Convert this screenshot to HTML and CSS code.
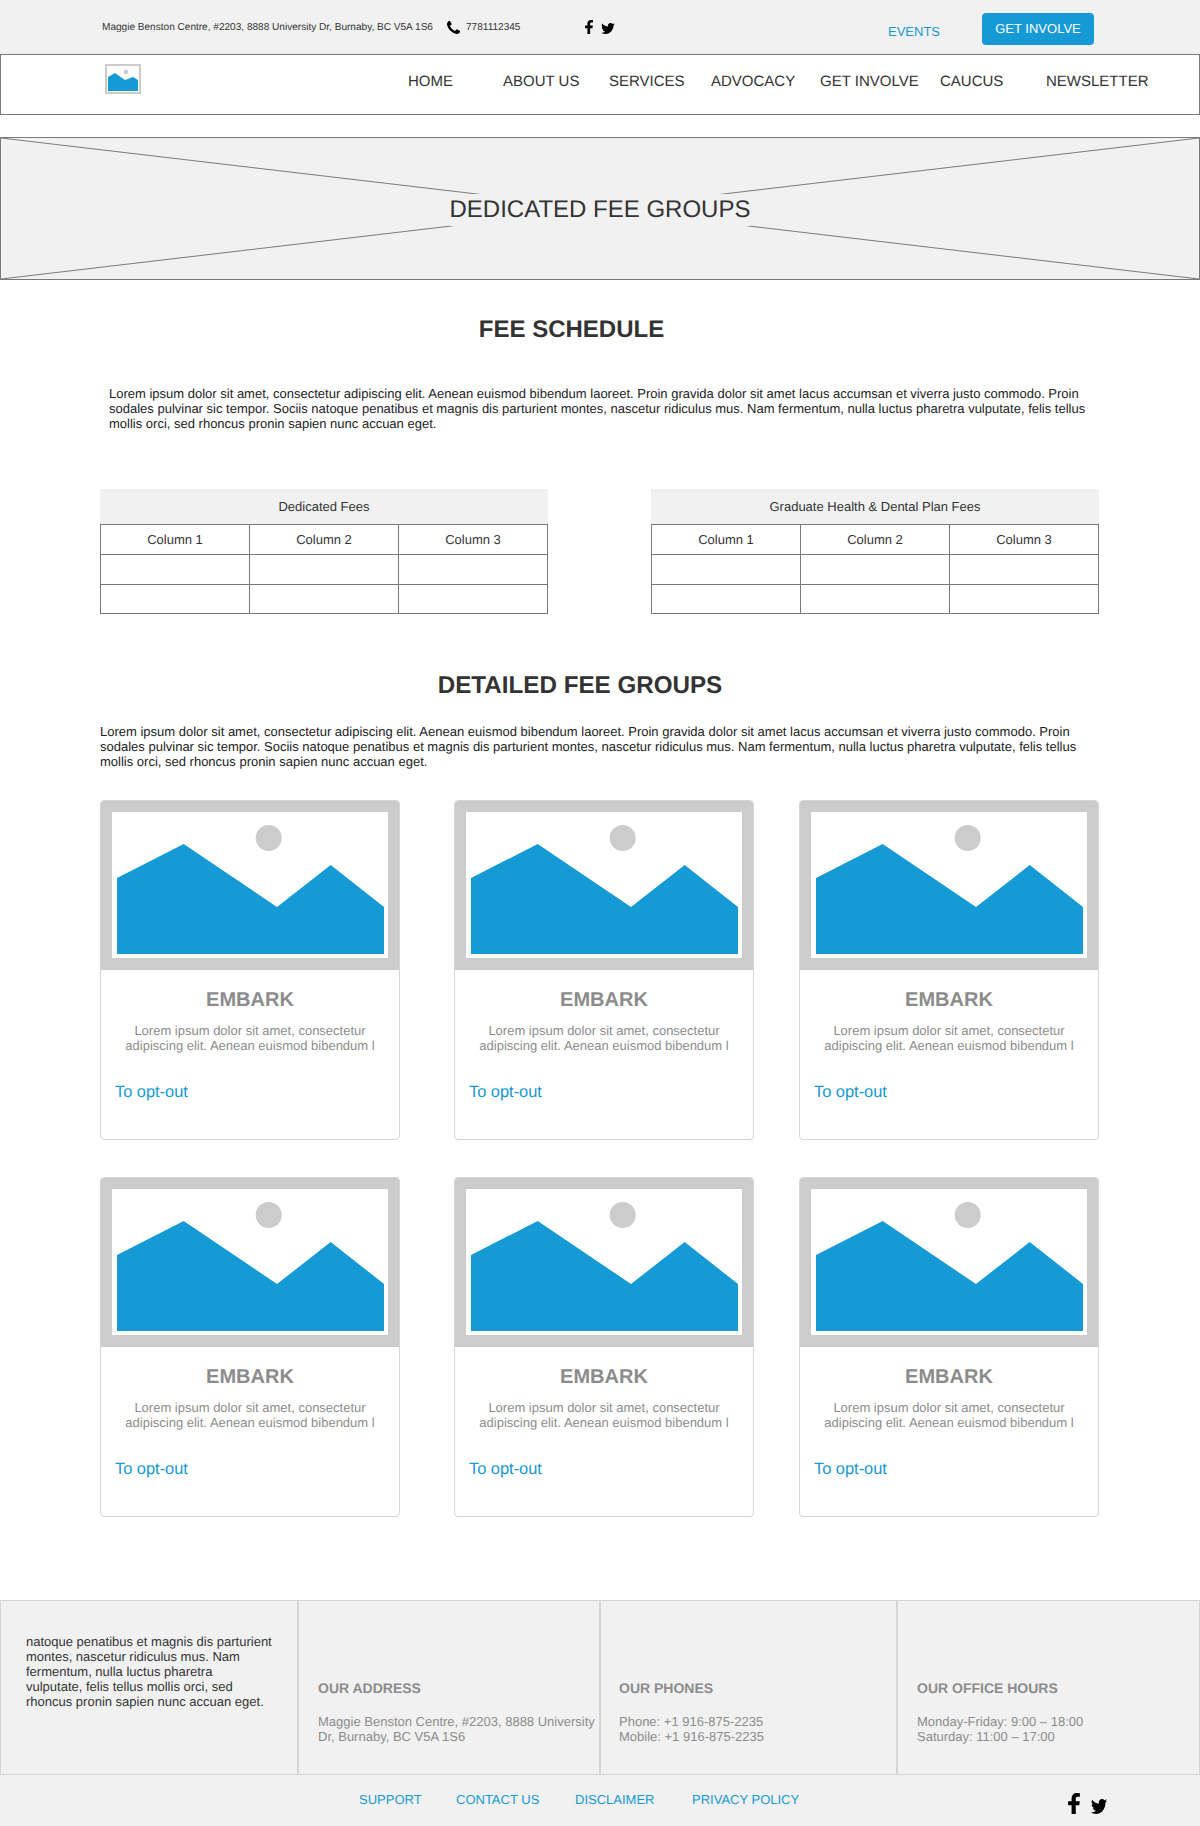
FILE: index.html
```html
<!DOCTYPE html>
<html lang="en">
<head>
    <meta charset="UTF-8">
    <meta name="viewport" content="width=device-width, initial-scale=1.0">
    <title>Dedicated Fee Groups</title>
    <link rel="stylesheet" href="styles.css">
</head>
<body>

<!-- Top bar -->
<div class="topbar">
    <span class="top-address">Maggie Benston Centre, #2203, 8888 University Dr, Burnaby, BC V5A 1S6</span>
    <svg class="top-phone-icon" viewBox="0 0 1408 1408"><path d="M1408 1112q0 27-10 70.5t-21 68.5q-21 50-122 106-94 51-186 51-27 0-53-3.5t-57.5-12.5-47-14.5-55.5-20.5-49-18q-98-35-175-83-127-79-264-216t-216-264q-48-77-83-175-3-9-18-49t-20.5-55.5-14.5-47-12.5-57.5-3.5-53q0-92 51-186 56-101 106-122 25-11 68.5-21t70.5-10q14 0 21 3 18 6 53 76 11 19 30 54t35 63.5 31 53.5q3 4 17.5 25t21.5 35.5 7 28.5q0 20-28.5 50t-62 55-62 53-28.5 46q0 9 5 22.5t8.5 20.5 14 24 11.5 19q76 137 174 235t235 174q2 1 19 11.5t24 14 20.5 8.5 22.5 5q18 0 46-28.5t53-62 55-62 50-28.5q14 0 28.5 7t35.5 21.5 25 17.5q25 15 53.5 31t63.5 35 54 30q70 35 76 53 3 7 3 21z"/></svg>
    <span class="top-phone">7781112345</span>
    <div class="top-social">
        <svg class="icon-f" viewBox="95 0 864 1536"><path d="M959 12v264h-157q-86 0-116 36t-30 108v189h293l-39 296h-254v759h-306v-759h-255v-296h255v-218q0-186 104-288.5t277-102.5q147 0 228 12z"/></svg>
        <svg class="icon-tw" viewBox="0 48 512 416"><path d="M459.37 151.716c.325 4.548.325 9.097.325 13.645 0 138.72-105.583 298.558-298.558 298.558-59.452 0-114.68-17.219-161.137-47.106 8.447.974 16.568 1.299 25.34 1.299 49.055 0 94.213-16.568 130.274-44.832-46.132-.975-84.792-31.188-98.112-72.772 6.498.974 12.995 1.624 19.818 1.624 9.421 0 18.843-1.3 27.614-3.573-48.081-9.747-84.143-51.98-84.143-102.985v-1.299c13.969 7.797 30.214 12.67 47.431 13.319-28.264-18.843-46.781-51.005-46.781-87.391 0-19.492 5.197-37.36 14.294-52.954 51.655 63.675 129.3 105.258 216.365 109.807-1.624-7.797-2.599-15.918-2.599-24.04 0-57.828 46.782-104.934 104.934-104.934 30.213 0 57.502 12.67 76.67 33.137 23.715-4.548 46.456-13.32 66.599-25.34-7.798 24.366-24.366 44.833-46.132 57.827 21.117-2.273 41.584-8.122 60.426-16.243-14.292 20.791-32.161 39.308-52.628 54.253z"/></svg>
    </div>
    <a class="top-events" href="#">EVENTS</a>
    <a class="top-button" href="#">GET INVOLVE</a>
</div>

<!-- Main nav -->
<div class="navbar">
    <svg class="nav-logo" viewBox="0 0 36 30">
        <rect x="1" y="1" width="34" height="28" fill="#fff" stroke="#ccc" stroke-width="2"/>
        <circle cx="21" cy="8" r="2.4" fill="#ccc"/>
        <polygon points="3,13 10,9 20,16 28,13 33,16 33,27 3,27" fill="#169ad6"/>
    </svg>
    <div class="nav-links">
        <a href="#">HOME</a>
        <a href="#">ABOUT US</a>
        <a href="#">SERVICES</a>
        <a href="#">ADVOCACY</a>
        <a href="#">GET INVOLVE</a>
        <a href="#">CAUCUS</a>
        <a href="#">NEWSLETTER</a>
    </div>
</div>

<!-- Hero placeholder -->
<div class="hero">
    <svg class="hero-cross" viewBox="0 0 1200 143" preserveAspectRatio="none">
        <line x1="0" y1="0" x2="1200" y2="143"/>
        <line x1="0" y1="143" x2="1200" y2="0"/>
    </svg>
    <h1 class="hero-title">DEDICATED FEE GROUPS</h1>
</div>

<h2 class="section-title title-schedule">FEE SCHEDULE</h2>
<p class="intro intro-schedule">Lorem ipsum dolor sit amet, consectetur adipiscing elit. Aenean euismod bibendum laoreet. Proin gravida dolor sit amet lacus accumsan et viverra justo commodo. Proin sodales pulvinar sic tempor. Sociis natoque penatibus et magnis dis parturient montes, nascetur ridiculus mus. Nam fermentum, nulla luctus pharetra vulputate, felis tellus mollis orci, sed rhoncus pronin sapien nunc accuan eget.</p>

<div class="tables">
    <table class="fee-table">
        <caption>Dedicated Fees</caption>
        <tr><td>Column 1</td><td>Column 2</td><td>Column 3</td></tr>
        <tr><td></td><td></td><td></td></tr>
        <tr class="last-row"><td></td><td></td><td></td></tr>
    </table>
    <table class="fee-table">
        <caption>Graduate Health &amp; Dental Plan Fees</caption>
        <tr><td>Column 1</td><td>Column 2</td><td>Column 3</td></tr>
        <tr><td></td><td></td><td></td></tr>
        <tr class="last-row"><td></td><td></td><td></td></tr>
    </table>
</div>

<h2 class="section-title title-detailed">DETAILED FEE GROUPS</h2>
<p class="intro intro-detailed">Lorem ipsum dolor sit amet, consectetur adipiscing elit. Aenean euismod bibendum laoreet. Proin gravida dolor sit amet lacus accumsan et viverra justo commodo. Proin sodales pulvinar sic tempor. Sociis natoque penatibus et magnis dis parturient montes, nascetur ridiculus mus. Nam fermentum, nulla luctus pharetra vulputate, felis tellus mollis orci, sed rhoncus pronin sapien nunc accuan eget.</p>

<!-- Fee group cards -->
<div class="cards">
    <div class="card">
        <svg class="card-image" viewBox="0 0 300 170"><rect x="6" y="6" width="288" height="158" fill="#fff" stroke="#ccc" stroke-width="12"/><circle cx="168.7" cy="38" r="13" fill="#ccc"/><polygon points="17,78 83.7,44 177,107 230.7,65 284,107 284,154 17,154" fill="#169ad6"/></svg>
        <h3>EMBARK</h3>
        <p>Lorem ipsum dolor sit amet, consectetur adipiscing elit. Aenean euismod bibendum l</p>
        <a href="#">To opt-out</a>
    </div>
    <div class="card">
        <svg class="card-image" viewBox="0 0 300 170"><rect x="6" y="6" width="288" height="158" fill="#fff" stroke="#ccc" stroke-width="12"/><circle cx="168.7" cy="38" r="13" fill="#ccc"/><polygon points="17,78 83.7,44 177,107 230.7,65 284,107 284,154 17,154" fill="#169ad6"/></svg>
        <h3>EMBARK</h3>
        <p>Lorem ipsum dolor sit amet, consectetur adipiscing elit. Aenean euismod bibendum l</p>
        <a href="#">To opt-out</a>
    </div>
    <div class="card">
        <svg class="card-image" viewBox="0 0 300 170"><rect x="6" y="6" width="288" height="158" fill="#fff" stroke="#ccc" stroke-width="12"/><circle cx="168.7" cy="38" r="13" fill="#ccc"/><polygon points="17,78 83.7,44 177,107 230.7,65 284,107 284,154 17,154" fill="#169ad6"/></svg>
        <h3>EMBARK</h3>
        <p>Lorem ipsum dolor sit amet, consectetur adipiscing elit. Aenean euismod bibendum l</p>
        <a href="#">To opt-out</a>
    </div>
    <div class="card">
        <svg class="card-image" viewBox="0 0 300 170"><rect x="6" y="6" width="288" height="158" fill="#fff" stroke="#ccc" stroke-width="12"/><circle cx="168.7" cy="38" r="13" fill="#ccc"/><polygon points="17,78 83.7,44 177,107 230.7,65 284,107 284,154 17,154" fill="#169ad6"/></svg>
        <h3>EMBARK</h3>
        <p>Lorem ipsum dolor sit amet, consectetur adipiscing elit. Aenean euismod bibendum l</p>
        <a href="#">To opt-out</a>
    </div>
    <div class="card">
        <svg class="card-image" viewBox="0 0 300 170"><rect x="6" y="6" width="288" height="158" fill="#fff" stroke="#ccc" stroke-width="12"/><circle cx="168.7" cy="38" r="13" fill="#ccc"/><polygon points="17,78 83.7,44 177,107 230.7,65 284,107 284,154 17,154" fill="#169ad6"/></svg>
        <h3>EMBARK</h3>
        <p>Lorem ipsum dolor sit amet, consectetur adipiscing elit. Aenean euismod bibendum l</p>
        <a href="#">To opt-out</a>
    </div>
    <div class="card">
        <svg class="card-image" viewBox="0 0 300 170"><rect x="6" y="6" width="288" height="158" fill="#fff" stroke="#ccc" stroke-width="12"/><circle cx="168.7" cy="38" r="13" fill="#ccc"/><polygon points="17,78 83.7,44 177,107 230.7,65 284,107 284,154 17,154" fill="#169ad6"/></svg>
        <h3>EMBARK</h3>
        <p>Lorem ipsum dolor sit amet, consectetur adipiscing elit. Aenean euismod bibendum l</p>
        <a href="#">To opt-out</a>
    </div>
</div>

<!-- Footer -->
<div class="footer-columns">
    <div class="footer-col footer-about">natoque penatibus et magnis dis parturient montes, nascetur ridiculus mus. Nam fermentum, nulla luctus pharetra<br>vulputate, felis tellus mollis orci, sed rhoncus pronin sapien nunc accuan eget.</div>
    <div class="footer-col">
        <h4>OUR ADDRESS</h4>
        <p>Maggie Benston Centre, #2203, 8888 University Dr, Burnaby, BC V5A 1S6</p>
    </div>
    <div class="footer-col footer-phones">
        <h4>OUR PHONES</h4>
        <p>Phone: +1 916-875-2235<br>Mobile: +1 916-875-2235</p>
    </div>
    <div class="footer-col">
        <h4>OUR OFFICE HOURS</h4>
        <p>Monday-Friday: 9:00 – 18:00<br>Saturday: 11:00 – 17:00</p>
    </div>
</div>
<div class="footer-bottom">
    <a class="link-support" href="#">SUPPORT</a>
    <a class="link-contact" href="#">CONTACT US</a>
    <a class="link-disclaimer" href="#">DISCLAIMER</a>
    <a class="link-privacy" href="#">PRIVACY POLICY</a>
    <div class="footer-social">
        <svg class="footer-f" viewBox="95 0 864 1536"><path d="M959 12v264h-157q-86 0-116 36t-30 108v189h293l-39 296h-254v759h-306v-759h-255v-296h255v-218q0-186 104-288.5t277-102.5q147 0 228 12z"/></svg>
        <svg class="footer-tw" viewBox="0 48 512 416" preserveAspectRatio="none"><path d="M459.37 151.716c.325 4.548.325 9.097.325 13.645 0 138.72-105.583 298.558-298.558 298.558-59.452 0-114.68-17.219-161.137-47.106 8.447.974 16.568 1.299 25.34 1.299 49.055 0 94.213-16.568 130.274-44.832-46.132-.975-84.792-31.188-98.112-72.772 6.498.974 12.995 1.624 19.818 1.624 9.421 0 18.843-1.3 27.614-3.573-48.081-9.747-84.143-51.98-84.143-102.985v-1.299c13.969 7.797 30.214 12.67 47.431 13.319-28.264-18.843-46.781-51.005-46.781-87.391 0-19.492 5.197-37.36 14.294-52.954 51.655 63.675 129.3 105.258 216.365 109.807-1.624-7.797-2.599-15.918-2.599-24.04 0-57.828 46.782-104.934 104.934-104.934 30.213 0 57.502 12.67 76.67 33.137 23.715-4.548 46.456-13.32 66.599-25.34-7.798 24.366-24.366 44.833-46.132 57.827 21.117-2.273 41.584-8.122 60.426-16.243-14.292 20.791-32.161 39.308-52.628 54.253z"/></svg>
    </div>
</div>

</body>
</html>
```

FILE: styles.css
```css
/* Base */
body {
    margin: 0;
    font-family: "Liberation Sans", Arial, sans-serif;
    font-size: 13px;
    line-height: 15px;
    color: #333;
    background-color: #fff;
    text-rendering: geometricPrecision;
}
a {
    text-decoration: none;
}
svg {
    display: block;
}

/* Top bar */
.topbar {
    height: 54px;
    background-color: #f1f1f1;
    display: flex;
    align-items: center;
    padding-left: 102px;
    box-sizing: border-box;
}
.top-address {
    width: 345px;
    font-size: 10.07px;
    margin-top: 1px;
}
.top-phone-icon {
    width: 13px;
    height: 13px;
    margin-right: 6px;
}
.top-phone {
    width: 119px;
    font-size: 10.07px;
    margin-top: 1px;
}
.top-social {
    display: flex;
    align-items: flex-end;
    width: 303px;
    gap: 8px;
    margin-top: -1px;
}
.icon-f {
    width: 8px;
    height: 14px;
}
.icon-tw {
    width: 14px;
    height: 11px;
}
.top-events {
    width: 94px;
    color: #169ad6;
    margin-top: 9px;
}
.top-button {
    width: 112px;
    height: 32px;
    line-height: 31px;
    text-align: center;
    color: #fff;
    background-color: #169ad6;
    border-radius: 4px;
    margin-top: 4px;
}

/* Nav */
.navbar {
    height: 61px;
    border: 1px solid #797979;
    display: flex;
    box-sizing: border-box;
    padding: 9px 0 0 104px;
    background-color: #fff;
}
.nav-logo {
    width: 36px;
    height: 30px;
}
.nav-links {
    display: grid;
    grid-template-columns: 95px 106px 102px 109px 120px 106px auto;
    margin-left: 267px;
    padding-top: 10px;
    font-size: 15px;
}
.nav-links a {
    color: #333;
}

/* Hero */
.hero {
    position: relative;
    height: 143px;
    margin-top: 22px;
    border: 1px solid #797979;
    box-sizing: border-box;
    background-color: #f1f1f1;
    display: flex;
    align-items: center;
    justify-content: center;
}
.hero-cross {
    position: absolute;
    left: 0;
    top: 0;
    width: 100%;
    height: 100%;
}
.hero-cross line {
    stroke: #797979;
    stroke-width: 1;
}
.hero-title {
    position: relative;
    margin: 2px 0 0;
    padding-bottom: 1px;
    font-size: 24px;
    line-height: 31px;
    font-weight: normal;
    background-color: #f1f1f1;
}

/* Section headings and copy */
.section-title {
    margin: 0;
    font-size: 24px;
    line-height: 28px;
    font-weight: bold;
    text-align: center;
}
.title-schedule {
    margin-top: 36px;
    width: 1143px;
}
.title-detailed {
    margin-top: 58px;
    width: 1160px;
    font-size: 24.2px;
}
.intro {
    margin: 0;
    color: #222;
    width: 990px;
}
.intro-schedule {
    margin: 42px 0 0 109px;
}
.intro-detailed {
    margin: 24px 0 0 100px;
}

/* Fee tables */
.tables {
    display: flex;
    gap: 103px;
    margin: 58px 0 0 100px;
}
.fee-table {
    width: 448px;
    border-collapse: collapse;
    table-layout: fixed;
}
.fee-table caption {
    height: 35px;
    line-height: 35px;
    background-color: #f1f1f1;
}
.fee-table td {
    height: 29px;
    padding: 0;
    border: 1px solid #797979;
    text-align: center;
}
.fee-table .last-row td {
    height: 28px;
}

/* Cards */
.cards {
    display: grid;
    grid-template-columns: 354px 345px 300px;
    row-gap: 37px;
    margin: 31px 0 0 100px;
}
.card {
    width: 300px;
    height: 340px;
    box-sizing: border-box;
    border: 1px solid #d5d5d5;
    border-radius: 4px;
    overflow: hidden;
}
.card-image {
    width: 300px;
    height: 170px;
    margin: -1px 0 0 -1px;
}
.card h3 {
    margin: 18px 0 0;
    font-size: 20px;
    line-height: 24px;
    font-weight: bold;
    color: #8c8c8c;
    text-align: center;
}
.card p {
    margin: 11px 0 0;
    padding: 0 20px;
    color: #8c8c8c;
    text-align: center;
}
.card a {
    display: block;
    margin: 30px 0 0 14px;
    font-size: 16.4px;
    line-height: 18px;
    color: #169ad6;
}

/* Footer */
.footer-columns {
    display: grid;
    grid-template-columns: 298px 302px 297px 303px;
    height: 175px;
    margin-top: 83px;
    background-color: #f1f1f1;
    border-top: 1px solid #d5d5d5;
    border-bottom: 1px solid #d5d5d5;
    box-sizing: border-box;
}
.footer-col {
    border-left: 1px solid #d5d5d5;
    border-right: 1px solid #d5d5d5;
    padding: 80px 0 0 19px;
}
.footer-col h4 {
    margin: 0 0 18px;
    font-size: 14px;
    line-height: 15px;
    color: #8c8c8c;
}
.footer-col p {
    margin: 0;
    color: #8c8c8c;
}
.footer-about {
    padding: 33px 20px 0 25px;
    color: #333;
}
.footer-phones {
    padding-left: 18px;
}
.footer-bottom {
    height: 52px;
    background-color: #f1f1f1;
    display: flex;
    padding: 17px 0 0 359px;
    box-sizing: border-box;
}
.footer-bottom a {
    color: #169ad6;
}
.link-support {
    width: 97px;
}
.link-contact {
    width: 119px;
}
.link-disclaimer {
    width: 117px;
}
.link-privacy {
    width: 376px;
}
.footer-social {
    display: flex;
    align-items: flex-end;
    gap: 11px;
    height: 22px;
}
.footer-f {
    width: 12px;
    height: 21px;
}
.footer-tw {
    width: 16px;
    height: 15px;
}
```
